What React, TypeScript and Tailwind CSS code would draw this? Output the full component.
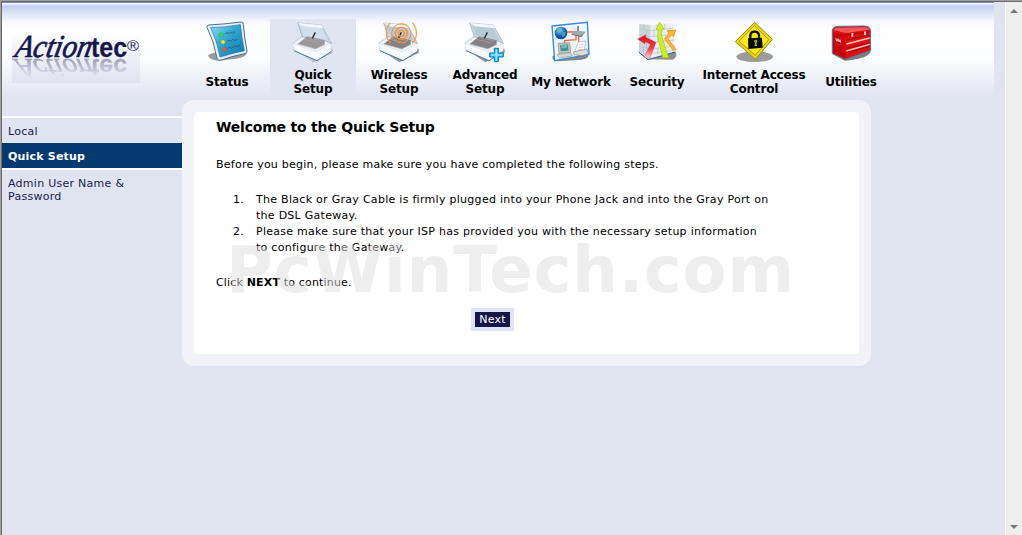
import type { ReactNode } from 'react'

function StatusIcon() {
  return (
    <svg viewBox="0 0 126 126" className="w-[42px] h-[42px]">
      <defs>
        <linearGradient id="screen" x1="0" y1="0" x2="1" y2="1">
          <stop offset="0" stopColor="#8edcf0" />
          <stop offset="0.45" stopColor="#2fa6cf" />
          <stop offset="1" stopColor="#0b78ad" />
        </linearGradient>
      </defs>
      <path d="M6 103 Q20 92 50 95 L122 95 Q121 108 90 113 L38 119 Q8 117 6 103Z" fill="#9a9a9a" />
      <path d="M8 12 Q50 10 106 3 Q112 3 112 10 Q116 55 123 90 Q124 97 117 98 Q75 106 43 118 Q36 120 33 112 Q24 60 3 19 Q2 13 8 12Z" fill="#e4edf5" stroke="#4a6f96" strokeWidth="3" />
      <path d="M14 20 Q60 19 103 11 Q107 50 115 89 Q78 97 42 108 Q34 61 14 20Z" fill="url(#screen)" stroke="#236d9e" strokeWidth="2" />
      <circle cx="46" cy="41" r="6" fill="#28ec45" stroke="#1a7d40" />
      <circle cx="51" cy="63" r="6" fill="#f8ee17" stroke="#9a9420" />
      <circle cx="55" cy="85" r="6" fill="#f4583a" stroke="#9a3c2c" />
      <path d="M58 38l6-4 3 5 7-6 5 4 5-5 4 4M62 61l7-4 4 4 8-6 5 4 7-4M65 83l7-5 5 4 8-7 6 2 11-4" stroke="#33607f" strokeWidth="3" fill="none" />
    </svg>
  )
}

function Modem({ faded = false }: { faded?: boolean }) {
  return (
    <g>
      <path d="M10 88 L64 124 L122 96 L122 84Z" fill="#7c7c7c" opacity={faded ? 0.35 : 0.8} />
      <path d="M3 66 L43 37 L116 65 L117 91 L76 119 L6 88Z" fill="#eef3f9" stroke="#a7b5c7" strokeWidth="2" />
      <path d="M3 68 L73 93 L116 67 L117 92 L76 119 L6 89Z" fill="#f8fafd" />
      <path d="M6 89 L75 119 L117 92" fill="none" stroke="#3f76ae" strokeWidth="3" />
      <path d="M3 67 L73 93 L116 67" fill="none" stroke="#d3dce7" strokeWidth="2" />
      <path d="M17 6 L88 12 L119 68 L89 55 L31 48Z" fill="#cad7e4" stroke="#9aacbd" strokeWidth="2" />
      <path d="M23 10 L84 16 L108 58 L36 43Z" fill={faded ? '#d1dfec' : '#b9cad7'} />
      <path d="M17 6 L88 12 L94 22 L33 16Z" fill="#f4f8fb" />
      <path d="M17 69 L46 46 L98 58 L98 71 L71 84Z" fill={faded ? '#9b9799' : '#858084'} />
      <path d="M17 69 L71 84 L98 70" stroke="#bcbcc0" strokeWidth="2" fill="none" />
      <path d="M37 55 L82 66 M49 49 L92 60" stroke="#aaa5a5" strokeWidth="2" />
      <path d="M61 52 L70 34" stroke="#282a2e" strokeWidth="4" />
    </g>
  )
}

function QuickIcon() {
  return <svg viewBox="0 0 126 126" className="w-[42px] h-[42px]"><Modem faded /></svg>
}

function WirelessIcon() {
  return (
    <svg viewBox="0 0 126 126" className="w-[42px] h-[42px]">
      <Modem />
      <g fill="none" stroke="#ff8b2c" strokeWidth="4">
        <circle cx="70" cy="37" r="9" />
        <circle cx="70" cy="37" r="18" />
        <circle cx="70" cy="37" r="29" strokeWidth="3" />
        <path d="M37 5 A45 45 0 0 0 38 67 M103 5 A45 45 0 0 1 103 67" opacity="0.8" />
      </g>
    </svg>
  )
}

function AdvancedIcon() {
  return (
    <svg viewBox="0 0 126 126" className="w-[42px] h-[42px]">
      <Modem />
      <path d="M91 82 H103 V96 H118 V108 H103 V122 H91 V108 H77 V96 H91Z" fill="#4cc9f5" stroke="#0874b3" strokeWidth="3" />
      <path d="M97 86 V118 M81 102 H114" stroke="#a7eaff" strokeWidth="3" />
    </svg>
  )
}

function NetworkIcon() {
  return (
    <svg viewBox="0 0 126 126" className="w-[42px] h-[42px]">
      <defs>
        <radialGradient id="globe" cx="0.4" cy="0.3">
          <stop offset="0" stopColor="#79c7ff" />
          <stop offset="1" stopColor="#0752ad" />
        </radialGradient>
      </defs>
      <path d="M8 104 L110 98 Q125 109 95 116 L24 121 Q3 119 8 104Z" fill="#858585" />
      <path d="M6 15 L112 4 L117 100 L14 119Z" fill="#f0f6fc" stroke="#3688e2" strokeWidth="4" />
      <path d="M50 33 H77 M78 45 L78 56 L44 59 V68 M86 46 V70" fill="none" stroke="#fa6542" strokeWidth="4" />
      <circle cx="33" cy="36" r="19" fill="url(#globe)" />
      <path d="M21 25 Q31 17 37 24 L32 32 L22 35Z M36 35 L48 33 L43 46 L36 48Z" fill="#76bd9a" opacity="0.7" />
      <path d="M63 41 L78 30 L106 33 L94 49Z" fill="#71797e" />
      <path d="M64 39 L79 29 L106 32 L94 44Z" fill="#a2aaad" />
      <path d="M84 30 V15" stroke="#505d63" strokeWidth="4" />
      <path d="M24 67 L59 65 L62 94 L27 97Z" fill="#c8ccbe" stroke="#7e8885" strokeWidth="2" />
      <path d="M30 72 L54 70 L56 89 L32 91Z" fill="#4c8d9b" />
      <path d="M33 73 L52 71 L51 80 L34 82Z" fill="#78b6bd" />
      <path d="M21 100 L61 95 L68 105 L28 111Z" fill="#d7d8d2" stroke="#8f9692" strokeWidth="2" />
      <path d="M75 91 L84 63 L107 60 L103 90Z" fill="#fff" stroke="#a9adad" strokeWidth="2" />
      <path d="M89 70h11M87 78h12M84 85h14" stroke="#aaa" strokeWidth="2" />
      <path d="M70 93 L111 84 L116 98 L96 104 L72 101Z" fill="#dbdedb" stroke="#7e8481" strokeWidth="2" />
    </svg>
  )
}

function SecurityIcon() {
  return (
    <svg viewBox="0 0 126 126" className="w-[42px] h-[42px]">
      <defs>
        <linearGradient id="redArrow" x1="0" y1="0" x2="0" y2="1">
          <stop offset="0" stopColor="#db1220" />
          <stop offset="0.6" stopColor="#f0414c" />
          <stop offset="1" stopColor="#ffd4d5" />
        </linearGradient>
      </defs>
      <path d="M5 91 L35 115 L111 116 Q128 105 118 93Z" fill="#8f8f8f" />
      <path d="M10 9 L43 12 L111 6 L118 93 L36 116 L9 93Z" fill="#e8eef2" />
      <path d="M10 9 L43 12 V113 L9 93Z" fill="#cbd5dc" />
      <path d="M10 25L43 29L112 22M10 41L43 47L114 40M10 58L43 65L115 57M9 76L43 84L117 75M43 98L118 87M23 11V27M31 28V45M22 43V61M32 64V82M22 80V99M63 11V27M86 8V25M54 28V46M100 24V41M65 46V63M88 43V60M54 65V82M77 61V79M101 59V77M65 83V100" fill="none" stroke="#b3c1ca" strokeWidth="2" />
      <path d="M9 94 L36 116 L118 93" fill="none" stroke="#1f5ca8" strokeWidth="3" />
      <path d="M5 54 L29 42 L29 49 L60 64 L42 111 L24 110 L43 70 L28 62 L27 69Z" fill="url(#redArrow)" stroke="#d52935" strokeWidth="1" />
      <path d="M71 3 L84 24 L78 24 L76 42 L98 110 L80 110 L65 47 L67 25 L60 25Z" fill="#cfef25" stroke="#a6c411" strokeWidth="2" />
      <path d="M119 27 L113 47 L107 42 L96 53 L121 87 L109 85 L86 54 L99 36 L93 29Z" fill="#ffb52d" stroke="#e58b10" strokeWidth="2" />
    </svg>
  )
}

function AccessIcon() {
  return (
    <svg viewBox="0 0 126 126" className="w-[42px] h-[42px]">
      <ellipse cx="65" cy="107" rx="55" ry="16" fill="#9b9b9b" />
      <path d="M65 4 L118 55 L67 115 L7 62Z" fill="#e9d90b" stroke="#9c8b0a" strokeWidth="3" />
      <path d="M64 14 L107 56 L67 103 L18 61Z" fill="#fde918" stroke="#83770a" strokeWidth="2" />
      <path d="M52 55 V43 Q52 33 63 32 Q77 31 78 44 V53" fill="none" stroke="#090a0a" strokeWidth="7" />
      <path d="M45 52 L87 50 L89 80 L46 84Z" fill="#0a0b0b" />
      <path d="M63 61 a5 5 0 1 1 7 5 l2 9 h-8 l2-9Z" fill="#b8aa12" />
    </svg>
  )
}

function ToolboxIcon() {
  return (
    <svg viewBox="0 0 126 126" className="w-[42px] h-[42px]">
      <path d="M5 98 L44 119 Q109 115 122 93 L121 83Z" fill="#7e7e7e" />
      <path d="M7 25 Q13 15 25 16 L101 15 Q120 15 121 27 L122 88 L46 115 L7 97Z" fill="#e20d12" stroke="#4978a1" strokeWidth="3" />
      <path d="M9 34 L45 41 L46 113 L9 96Z" fill="#c7070d" />
      <path d="M11 28 Q16 18 29 20 L103 19 Q114 19 117 26 L49 36Z" fill="#ff5857" />
      <path d="M44 42 L121 32" stroke="#9e080b" strokeWidth="3" />
      <path d="M50 57L118 42M50 67L118 52M50 82L118 65M50 94L118 76" stroke="#920c0d" strokeWidth="3" />
      <path d="M49 69L119 51M49 90L119 70" stroke="#ffc6c2" strokeWidth="4" />
      <path d="M64 36h6v12h-6zM102 31h6v12h-6z" fill="#ffe9df" stroke="#a90b0d" />
      <path d="M17 51l4 10 3-8 3 10 3-7 2 9" fill="none" stroke="#ffc1bd" strokeWidth="3" />
    </svg>
  )
}

type Tab = { lines: string[]; width: string; icon: ReactNode; active?: boolean }

const tabs: Tab[] = [
  { lines: ['Status'], width: 'w-[86px]', icon: <StatusIcon /> },
  { lines: ['Quick', 'Setup'], width: 'w-[86px]', icon: <QuickIcon />, active: true },
  { lines: ['Wireless', 'Setup'], width: 'w-[86px]', icon: <WirelessIcon /> },
  { lines: ['Advanced', 'Setup'], width: 'w-[86px]', icon: <AdvancedIcon /> },
  { lines: ['My Network'], width: 'w-[86px]', icon: <NetworkIcon /> },
  { lines: ['Security'], width: 'w-[86px]', icon: <SecurityIcon /> },
  { lines: ['Internet Access', 'Control'], width: 'w-[108px]', icon: <AccessIcon /> },
  { lines: ['Utilities'], width: 'w-[86px]', icon: <ToolboxIcon /> },
]

function Wordmark() {
  return (
    <>
      <text transform="translate(2 24) skewX(-12)" fontFamily="Liberation Serif, serif" fontStyle="italic" fontSize="32" stroke="#151650" strokeWidth="0.7" textLength="76" lengthAdjust="spacingAndGlyphs">Action</text>
      <text x="79" y="24" fontFamily="Liberation Sans, sans-serif" fontWeight="bold" fontSize="28" stroke="#151650" strokeWidth="0.3" textLength="36" lengthAdjust="spacingAndGlyphs">tec</text>
    </>
  )
}

function Logo() {
  return (
    <svg viewBox="0 0 128 50" className="w-[128px] h-[50px] overflow-visible" fill="#151650">
      <defs>
        <linearGradient id="logoBg" x1="0" y1="0" x2="0" y2="1">
          <stop offset="0" stopColor="#fdfdff" />
          <stop offset="1" stopColor="#dfe3ef" />
        </linearGradient>
        <linearGradient id="fade" x1="0" y1="0" x2="0" y2="1">
          <stop offset="0.1" stopColor="#fff" stopOpacity="0.03" />
          <stop offset="0.8" stopColor="#fff" stopOpacity="0.4" />
        </linearGradient>
        <mask id="fadeMask" maskUnits="userSpaceOnUse" x="0" y="0" width="128" height="32">
          <rect width="128" height="32" fill="url(#fade)" />
        </mask>
      </defs>
      <rect width="128" height="50" fill="url(#logoBg)" />
      <Wordmark />
      <text x="115" y="18" fontFamily="Liberation Sans, sans-serif" fontSize="15" textLength="12" lengthAdjust="spacingAndGlyphs">®</text>
      <g transform="translate(0 46) scale(1 -0.85)" mask="url(#fadeMask)">
        <Wordmark />
      </g>
    </svg>
  )
}

function Header() {
  return (
    <header className="flex w-[992px] h-[95px] bg-[linear-gradient(to_bottom,#ffffff_0px,#ffffff_1px,#d0dcf3_2px,#c3d2ef_4px,#dfe6f6_11px,#f8f9fd_19px,#ffffff_26px,#fcfdff_55px,#e1e5f1_93px)]">
      <div className="w-[182px] pl-[10px] pt-[30px] shrink-0"><Logo /></div>
      <nav className="flex pt-4">
        {tabs.map(tab => (
          <a key={tab.lines[0]} className={`${tab.width} ${tab.active ? 'bg-[#e0e5f1]' : ''} h-[79px] pt-[2px] flex flex-col items-center shrink-0`}>
            {tab.icon}
            <span className="h-7 mt-[5px] flex flex-col justify-center items-center">
              {tab.lines.map(line => (
                <span key={line} className="text-[12px] leading-[14px] tracking-[-0.15px] font-bold text-black whitespace-nowrap">{line}</span>
              ))}
            </span>
          </a>
        ))}
      </nav>
    </header>
  )
}

function Sidebar() {
  return (
    <aside className="w-[180px] pt-[18px] shrink-0 text-[11px] leading-[13px] tracking-[0.27px] text-[#1b1b50]">
      <div className="h-[27px] pt-[7px] pl-[6px] border-t-2 border-white">Local</div>
      <div className="h-[25px] pt-[7px] pl-[6px] bg-[#073b6f] text-white font-bold tracking-[0.2px]">Quick Setup</div>
      <div className="pt-[7px] pl-[6px] border-t-2 border-white">
        <div>Admin User Name &amp;</div>
        <div>Password</div>
      </div>
    </aside>
  )
}

function Panel() {
  return (
    <main className="mt-[2px] w-[689px] h-[266px] p-3 rounded-xl bg-[#f1f3f9]">
      <div className="relative w-[665px] h-[242px] rounded bg-white pl-[22px] pt-[7px] text-[11px] leading-4 tracking-[0.27px] text-black whitespace-nowrap">
        <h1 className="text-[14px] font-bold leading-4 tracking-[-0.2px]">Welcome to the Quick Setup</h1>
        <p className="mt-[22px] tracking-[0.24px]">Before you begin, please make sure you have completed the following steps.</p>
        <ol className="mt-[19px]">
          <li className="flex">
            <span className="w-10 pl-[17px]">1.</span>
            <div>
              <div className="tracking-[0.285px]">The Black or Gray Cable is firmly plugged into your Phone Jack and into the Gray Port on</div>
              <div>the DSL Gateway.</div>
            </div>
          </li>
          <li className="flex">
            <span className="w-10 pl-[17px]">2.</span>
            <div>
              <div>Please make sure that your ISP has provided you with the necessary setup information</div>
              <div>to configure the Gateway.</div>
            </div>
          </li>
        </ol>
        <p className="mt-[19px] tracking-[0.17px]">Click <b>NEXT</b> to continue.</p>
        <div className="mt-[17px] flex pl-[255px]">
          <button className="w-[43px] h-[23px] p-1 bg-[#dfe4fc]">
            <span className="block h-[15px] bg-[#171747] text-white text-[11px] leading-[16px] tracking-[0.2px]">Next</span>
          </button>
        </div>
        <div className="absolute left-[32px] top-[120px] text-[64px] leading-[76px] tracking-[0.85px] font-bold text-[#dddddd]/50 pointer-events-none">PcWinTech.com</div>
      </div>
    </main>
  )
}

function Scrollbar() {
  return (
    <div className="w-[17px] h-full bg-[#eeeeee] border-l border-white flex flex-col justify-between items-center pt-[7px] pb-[6px] shrink-0">
      <svg viewBox="0 0 8 4" className="w-2 h-1"><path d="M4 0 L8 4 H0Z" fill="#777" /></svg>
      <svg viewBox="0 0 8 4" className="w-2 h-1"><path d="M0 0 H8 L4 4Z" fill="#777" /></svg>
    </div>
  )
}

export default function App() {
  return (
    <div className="w-[1022px] h-[535px] overflow-hidden border-l border-t border-[#a0a0a0] font-['DejaVu_Sans',Verdana,sans-serif]">
      <div className="w-[1021px] h-[534px] flex border-l border-t border-[#696969] bg-[#e0e4f0]">
        <div className="w-[1003px] shrink-0">
          <div className="w-[992px] h-px bg-[#7593c9]" />
          <Header />
          <div className="flex">
            <Sidebar />
            <Panel />
          </div>
        </div>
        <Scrollbar />
      </div>
    </div>
  )
}
